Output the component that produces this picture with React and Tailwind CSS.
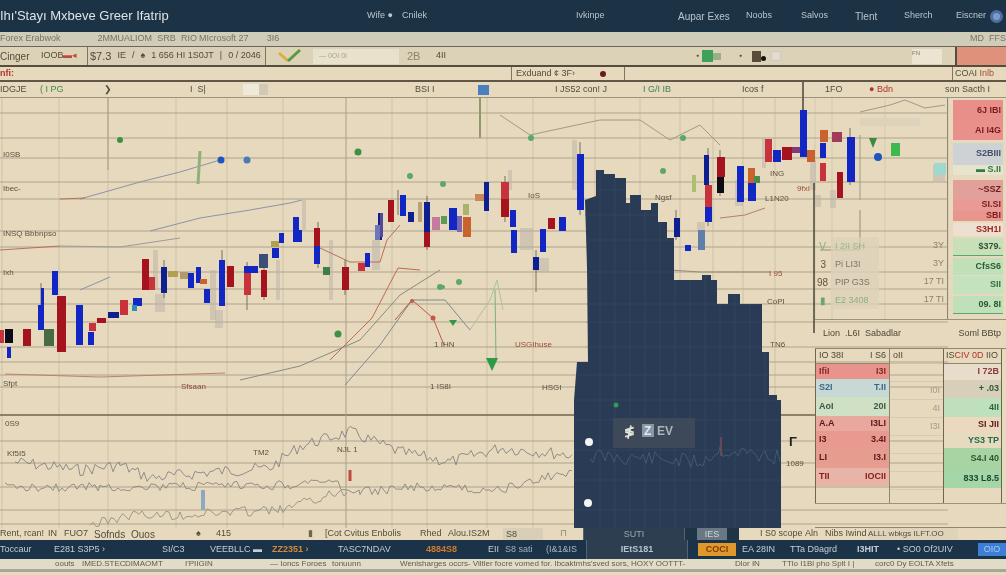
import React from 'react';

const B = '#1226c4';
const N = '#0e1f8f';
const R = '#a5141e';
const L = '#c8323a';
const K = '#0c0c18';
const G = '#4a8a4c';
const O = '#c8632e';
const T = '#b0a050';

// x, y, w, h, colour
const candles = [
  [0, 330, 4, 13, L], [5, 329, 8, 14, K], [7, 347, 4, 11, B], [23, 329, 8, 17, R], [41, 288, 3, 30, B], [38, 305, 6, 25, B],
  [44, 329, 10, 17, '#4a6a45'], [52, 271, 6, 24, B], [57, 296, 9, 56, R], [76, 305, 7, 40, B], [88, 332, 6, 13, B],
  [89, 323, 7, 8, L], [97, 318, 9, 5, R], [108, 312, 11, 6, N], [120, 300, 8, 15, L], [133, 298, 9, 8, B], [132, 305, 5, 6, '#2f8fb0'],
  [142, 259, 7, 31, R], [149, 277, 6, 13, L], [161, 267, 6, 26, N], [168, 271, 10, 6, T], [180, 272, 8, 7, '#b49a6a'],
  [188, 273, 6, 15, B], [196, 267, 5, 16, B], [200, 279, 7, 5, O], [204, 289, 6, 14, B], [219, 260, 6, 46, B],
  [227, 266, 7, 21, R], [244, 273, 7, 22, L], [244, 266, 14, 7, B], [261, 270, 6, 27, R], [259, 254, 9, 14, '#3a4e78'],
  [272, 248, 7, 10, B], [271, 241, 8, 6, T], [279, 233, 5, 10, B], [293, 217, 6, 25, B], [298, 230, 4, 12, B],
  [314, 245, 6, 19, B], [314, 228, 6, 18, R], [323, 267, 7, 8, '#3f7d4c'], [342, 267, 7, 23, R], [358, 263, 7, 8, L],
  [365, 253, 5, 14, B], [378, 213, 4, 27, N], [375, 225, 5, 15, '#6d76b8'], [388, 200, 6, 22, R], [380, 213, 3, 24, '#55479a'],
  [400, 195, 6, 21, B], [408, 212, 6, 10, N], [418, 202, 4, 20, '#b9a178'], [424, 202, 6, 30, N], [424, 232, 6, 15, R],
  [432, 217, 8, 13, '#c47aa0'], [441, 216, 6, 8, '#5d9a58'], [449, 208, 8, 22, B], [457, 216, 5, 16, '#7b65b0'],
  [463, 204, 6, 11, '#a8b46c'], [463, 217, 8, 20, O], [475, 194, 10, 7, '#c98858'], [484, 182, 5, 29, N],
  [501, 182, 8, 17, L], [501, 199, 8, 18, R], [510, 210, 6, 17, B], [511, 230, 6, 23, B], [540, 229, 6, 23, B],
  [533, 257, 6, 13, N], [548, 218, 7, 11, R], [559, 217, 7, 14, B], [577, 154, 7, 56, B],
  [674, 218, 6, 19, N], [685, 245, 6, 6, B], [698, 230, 7, 20, '#5d7fa8'], [704, 155, 5, 30, N], [705, 185, 7, 22, L],
  [705, 207, 7, 15, B], [717, 157, 8, 20, R], [717, 177, 7, 16, K], [737, 166, 7, 36, B], [748, 183, 8, 18, B],
  [748, 168, 7, 15, O], [754, 176, 6, 7, G], [765, 139, 7, 23, L], [773, 150, 8, 12, B], [782, 147, 10, 13, R],
  [792, 147, 15, 6, '#7a3c7a'], [800, 110, 7, 47, B], [807, 150, 8, 12, O], [820, 130, 8, 12, O], [820, 143, 6, 15, B],
  [820, 163, 6, 18, L], [832, 132, 10, 10, '#a03c5a'], [847, 137, 8, 45, B], [837, 172, 6, 26, R],
];

// pale shadows behind the candles
const ghosts = [
  [153, 250, 5, 40], [155, 294, 10, 18], [210, 270, 6, 50], [215, 310, 8, 18], [276, 260, 4, 40], [302, 200, 4, 30],
  [329, 240, 4, 60], [372, 240, 8, 30], [520, 228, 13, 22], [508, 170, 4, 20], [572, 140, 5, 50], [535, 258, 14, 14],
  [735, 180, 8, 26], [762, 138, 4, 30], [810, 160, 6, 30], [697, 222, 8, 10], [815, 195, 6, 12], [830, 190, 6, 18],
  [933, 165, 12, 16],
];

const wicks = [
  [41, 283, 41, 330], [164, 260, 164, 298], [222, 250, 222, 306], [247, 262, 247, 310], [264, 262, 264, 300],
  [318, 222, 318, 268], [345, 260, 345, 295], [398, 190, 398, 215], [427, 196, 427, 250], [505, 176, 505, 222],
  [536, 250, 536, 292], [580, 142, 580, 215], [676, 210, 676, 240], [708, 148, 708, 226], [720, 150, 720, 196],
  [850, 128, 850, 185],
];

const hLines = [113, 138, 158, 182, 199, 231, 247, 272, 289, 304, 322, 347, 362, 375, 387, 441, 463, 487, 510, 524];
const vLines = [2, 59, 108, 176, 227, 283, 392, 427, 487, 533, 595, 640, 680, 713, 743, 775];
const darkGridX = [600, 615, 630, 645, 660, 675, 690, 705, 720, 735, 750, 765];
const darkGridY = [190, 215, 240, 272, 304, 322, 347, 375, 400, 420, 450, 480, 510];

const indicators = [
  ['#8c92a8', '80,199 140,182 180,172 220,160'],
  ['#b8705a', '60,199 85,198'],
  ['#8c92a8', '150,231 200,218 250,210 290,203 302,200'],
  ['#b8705a', '0,250 60,246'],
  ['#9c9a9a', '60,246 120,247 180,238'],
  ['#8c92a8', '80,290 110,277'],
  ['#c08068', '5,374 100,377 225,373'],
  ['#8a8a80', '240,380 300,366 360,340 400,295 440,270'],
  ['#c46a50', '330,360 372,318 398,268 420,270'],
  ['#b8705a', '320,248 350,262 380,262 387,240 400,225'],
  ['#7c8a90', '345,385 380,345 412,300 445,300 470,330'],
  ['#c0584c', '395,320 412,300 433,318 444,345'],
  ['#a8c4a0', '470,330 490,300 497,280 503,310'],
  ['#7db07d', '495,290 496,360'],
  ['#a09a88', '500,115 530,135 600,120 640,120 670,140 700,125 720,145'],
  ['#a09a88', '860,112 890,105 905,100 925,108 945,105'],
  ['#b0846a', '720,218 745,215 765,208'],
  ['#948c7c', '600,272 640,268 700,272 770,272'],
  ['#a09a88', '860,135 860,200'],
  ['#a08878', '860,210 860,250 820,250'],
];

const dots = [
  ['#3d9140', 120, 140, 3], ['#3d9140', 358, 152, 3.5], ['#1e55c4', 221, 160, 3.5], ['#4a7ab8', 247, 160, 3.5],
  ['#3d9140', 338, 334, 3.5], ['#5ca868', 410, 176, 3], ['#5ca868', 443, 184, 3], ['#5ca868', 440, 287, 3],
  ['#5ca868', 459, 282, 3], ['#5ca868', 443, 287, 2], ['#5ca868', 531, 138, 3], ['#5ca868', 663, 171, 3],
  ['#5ca868', 683, 138, 3], ['#c0584c', 412, 301, 2], ['#c0584c', 433, 318, 2.5], ['#1e55c4', 878, 157, 4],
];

function jag(points, amp, seed) {
  let s = seed;
  const out = [];
  for (let i = 0; i < points.length - 1; i++) {
    const [x0, y0] = points[i];
    const [x1, y1] = points[i + 1];
    for (let x = x0; x < x1; x += 3) {
      s = (s * 9301 + 49297) % 233280;
      const n = (s / 233280 - 0.5) * amp;
      const y = y0 + ((y1 - y0) * (x - x0)) / (x1 - x0);
      out.push(`${x},${(y + n).toFixed(1)}`);
    }
  }
  return out.join(' ');
}

const waves = [
  ['#7a7980', jag([[15, 462], [80, 470], [120, 465], [150, 478], [210, 472], [270, 468], [300, 446], [350, 432], [400, 452], [450, 462], [500, 448], [574, 455]], 12, 7)],
  ['#7f7c78', jag([[5, 487], [100, 487], [180, 487], [290, 485], [320, 480], [360, 492], [420, 487], [500, 490], [574, 470]], 9, 21)],
  ['#8a8880', jag([[90, 525], [130, 515], [180, 515], [230, 512], [280, 510], [320, 498], [350, 490]], 10, 33)],
];

const overlayWave = jag([[590, 456], [640, 458], [700, 462], [720, 450], [781, 458]], 16, 11);

const silhouette =
  '585,200 596,196 596,170 604,170 604,174 615,174 615,178 626,178 626,203 630,203 630,195 641,195 641,210 651,210 651,203 658,203 658,222 667,222 667,238 674,238 674,280 702,280 702,275 711,275 711,280 717,280 717,304 728,304 728,294 740,294 740,304 762,304 762,352 769,352 769,395 777,395 777,400 781,400 781,528 574,528 574,400 577,362 588,362 587,267';

function Label({ x, y, fill = '#5b5342', size = 8, children }) {
  return (
    <text x={x} y={y} fill={fill} fontSize={size}>
      {children}
    </text>
  );
}

function ChartCanvas() {
  return (
    <svg viewBox="0 98 815 430" className="w-[815px] h-[430px] shrink-0 overflow-visible">
      <defs>
        <clipPath id="darkClip">
          <polygon points={silhouette} />
        </clipPath>
      </defs>
      {vLines.map((x) => (
        <line key={x} x1={x} y1="98" x2={x} y2="528" stroke="#cdc1a7" strokeWidth="1" />
      ))}
      {[815, 832, 885, 948].map((x) => (
        <line key={x} x1={x} y1="98" x2={x} y2="320" stroke="#d4c9af" strokeWidth="1" />
      ))}
      {hLines.map((y) => (
        <line key={y} x1="0" y1={y} x2="948" y2={y} stroke="#aea48e" strokeWidth="1" />
      ))}
      <line x1="0" y1="415" x2="815" y2="415" stroke="#6e6552" strokeWidth="1.5" />
      <line x1="346" y1="98" x2="346" y2="528" stroke="#a89e88" />
      <line x1="108" y1="98" x2="108" y2="170" stroke="#a49a84" />

      {ghosts.map(([x, y, w, h], i) => (
        <rect key={i} x={x} y={y} width={w} height={h} fill="#b8b2a8" opacity="0.5" />
      ))}
      <rect x="860" y="118" width="60" height="8" fill="#ddd2bb" />
      {indicators.map(([c, p], i) => (
        <polyline key={i} points={p} fill="none" stroke={c} strokeWidth="1" />
      ))}
      {waves.map(([c, p], i) => (
        <polyline key={i} points={p} fill="none" stroke={c} strokeWidth="0.8" />
      ))}
      {wicks.map(([x1, y1, x2, y2], i) => (
        <line key={i} x1={x1} y1={y1} x2={x2} y2={y2} stroke="#77705f" strokeWidth="1" />
      ))}
      <line x1="480" y1="98" x2="480" y2="138" stroke="#8f9a66" strokeWidth="2" />
      <line x1="803" y1="82" x2="803" y2="110" stroke="#4c4637" strokeWidth="1.5" />
      <line x1="814" y1="183" x2="814" y2="333" stroke="#4c4637" strokeWidth="1.5" />
      <line x1="200" y1="151" x2="198" y2="184" stroke="#8fb07a" strokeWidth="3" />
      <line x1="694" y1="175" x2="694" y2="192" stroke="#a8c070" strokeWidth="4" />
      <line x1="350" y1="470" x2="350" y2="481" stroke="#c0483c" strokeWidth="3" />
      <line x1="203" y1="490" x2="203" y2="510" stroke="#8fa8c0" strokeWidth="4" />

      {candles.map(([x, y, w, h, c], i) => (
        <rect key={i} x={x} y={y} width={w} height={h} fill={c} />
      ))}
      {dots.map(([c, x, y, r], i) => (
        <circle key={i} cx={x} cy={y} r={r} fill={c} />
      ))}
      <polygon points="486,358 498,358 492,371" fill="#2e9a48" />
      <polygon points="449,320 457,320 453,326" fill="#2e9a48" />
      <rect x="891" y="143" width="9" height="13" fill="#3fb84f" />
      <polygon points="869,138 877,138 873,148" fill="#3d8a3a" />
      <rect x="934" y="163" width="12" height="12" fill="#9fd8cf" />

      <polygon points={silhouette} fill="#2a3c55" />
      <g clipPath="url(#darkClip)">
        {darkGridX.map((x) => (
          <line key={x} x1={x} y1="160" x2={x} y2="528" stroke="#33455c" strokeWidth="1" />
        ))}
        {darkGridY.map((y) => (
          <line key={y} x1="570" y1={y} x2="785" y2={y} stroke="#33455c" strokeWidth="1" />
        ))}
        <polyline points={overlayWave} fill="none" stroke="#4a5f7e" strokeWidth="0.8" />
        <line x1="721" y1="437" x2="721" y2="456" stroke="#7a4a55" strokeWidth="1.5" />
      </g>
      <rect x="613" y="418" width="82" height="30" fill="#3d4958" />
      <rect x="642" y="424" width="12" height="13" fill="#8797a8" />
      <text x="624" y="436" fill="#e4e4de" fontSize="13" fontWeight="700">≸</text>
      <text x="644" y="435" fill="#e4e8ea" fontSize="12" fontWeight="700">Z</text>
      <text x="657" y="435" fill="#aab4bc" fontSize="12" fontWeight="700">EV</text>
      <circle cx="589" cy="442" r="4" fill="#f4f4f2" />
      <circle cx="588" cy="503" r="4" fill="#f4f4f2" />
      <circle cx="616" cy="405" r="2.5" fill="#2e9a58" />

      <Label x={3} y={157}>I0SB</Label>
      <Label x={3} y={191}>Ibec-</Label>
      <Label x={3} y={236}>INSQ Bbbnpso</Label>
      <Label x={3} y={275}>Ixh</Label>
      <Label x={3} y={386}>Sfpt</Label>
      <Label x={181} y={389} fill="#8a4a3a">Sfsaan</Label>
      <Label x={5} y={426}>0S9</Label>
      <Label x={7} y={456}>Kf5I5</Label>
      <Label x={253} y={455}>TM2</Label>
      <Label x={337} y={452}>NJL 1</Label>
      <Label x={434} y={347}>1 IHN</Label>
      <Label x={515} y={347} fill="#a04a3a">USGIhuse</Label>
      <Label x={430} y={389}>1 IS8I</Label>
      <Label x={542} y={390}>HSGI</Label>
      <Label x={655} y={200}>Ngsf</Label>
      <Label x={770} y={176}>ING</Label>
      <Label x={765} y={201}>L1N20</Label>
      <Label x={797} y={191} fill="#a04a3a">9fxI</Label>
      <Label x={767} y={304}>CoPI</Label>
      <Label x={770} y={347}>TN6</Label>
      <Label x={769} y={276} fill="#a04a3a">I 95</Label>
      <Label x={786} y={466}>1089</Label>
      <Label x={528} y={198}>IoS</Label>
      <text x="789" y="446" fill="#222" fontSize="13" fontWeight="700">Γ</text>
    </svg>
  );
}

const upperRows = [
  ['h-[22px] bg-[#e88f8a] text-[#7a1e1e]', '6J IBI'],
  ['h-[18px] bg-[#e9908c] text-[#7a1e1e]', 'AI  I4G'],
  ['mt-[3px] h-[22px] bg-[#cfd2d4] text-[#44506c]', 'S2BIII'],
  ['h-[10px] bg-[#e6e4cc] text-[#2e7a42]', '▬ S.II'],
  ['mt-[5px] h-[19px] bg-[#e2a09a] text-[#6e1e1e]', '~SSZ'],
  ['h-[12px] bg-[#ea9a94] text-[#7a1e1e]', 'SI.SI'],
  ['h-[10px] bg-[#e8958e] text-[#7a1e1e]', 'SBI'],
  ['mt-[2px] h-[13px] bg-[#eee0d0] text-[#9a2a22]', 'S3H1I'],
  ['mt-[2px] h-[18px] bg-[#c9dfb9] border-b border-[#5aa868] text-[#2a5a34]', '$379.'],
  ['mt-[2px] h-[17px] bg-[#bfe0b8] text-[#2a5a34]', 'CfsS6'],
  ['mt-[1px] h-[18px] bg-[#c4e2be] text-[#3a6a44]', 'SII'],
  ['mt-[2px] h-[18px] bg-[#bfe0b8] border-b border-[#5aa868] text-[#2a5a34]', '09. 8I'],
];

const faintRows = [
  ['V', 'I 2II SH', 'text-[#7fb07f]'],
  ['3', 'Pi LI3I', 'text-[#5b5342]'],
  ['98', 'PIP G3S', 'text-[#5b5342]'],
  ['▮', 'E2 3408', 'text-[#6ea36e]'],
];

const leftRows = [
  ['h-[15px] bg-[#e8948c] text-[#8a2a28]', 'IfiI', 'I3I'],
  ['h-[18px] bg-[#c8d8d4] text-[#3a6a8a]', 'S2I', 'T.II'],
  ['h-[19px] bg-[#cfe0c4] text-[#3a5a4a]', 'AoI', '20I'],
  ['h-[15px] bg-[#e9a89e] text-[#5a1a1a]', 'A.A', 'I3LI'],
  ['h-[17px] bg-[#e89a90] text-[#5a1a1a]', 'I3', '3.4I'],
  ['h-[20px] bg-[#e79c90] text-[#5a1a1a]', 'LI', 'I3.I'],
  ['h-[18px] bg-[#e8b4a8] text-[#8a1a18]', 'TII', 'IOCII'],
];

const rightRows = [
  ['h-[16px] bg-[#e8dccb] text-[#8a3a3a]', 'I 72B'],
  ['h-[18px] bg-[#d8cfb8] text-[#2a5a3a]', '+ .03'],
  ['h-[19px] bg-[#bfe0bc] text-[#2a6a3a]', '4II'],
  ['h-[16px] bg-[#ecd8bf] text-[#5a1a1a]', 'SI JII'],
  ['h-[15px] bg-[#e6dabf] text-[#1e6a4a]', 'YS3 TP'],
  ['h-[22px] bg-[#a8d4a4] text-[#2a5a34]', 'S4.I 40'],
  ['h-[18px] bg-[#a4d6a8] text-[#1e4a2a]', '833 L8.5'],
];

function SidePanels() {
  return (
    <aside className="flex flex-col w-[191px] h-[430px] text-[9px] text-[#4e4737]">
      <div className="flex h-[222px] border-b border-[#9c937e]">
        <div className="flex flex-col justify-end w-[133px] pb-[10px] border-r border-[#8f8672]">
          {faintRows.map(([a, b, c]) => (
            <div key={b} className={`flex items-center h-[18px] gap-[5px] pl-[2px] ${c}`}>
              <span className="w-[9px] text-[10px] text-right">{a}</span>
              <span className="w-[48px] h-[18px] px-[4px] leading-[18px] bg-[#ddd2bb] opacity-75">{b}</span>
              <span className="ml-auto pr-[3px] text-[#8a8270]">{a === '3' || a === 'V' ? '3Y' : '17 TI'}</span>
            </div>
          ))}
        </div>
        <div className="flex flex-col w-[50px] ml-[5px] pt-[2px]">
          {upperRows.map(([cls, t]) => (
            <div key={t} className={`flex items-center justify-end pr-[2px] font-bold ${cls}`}>
              {t}
            </div>
          ))}
        </div>
      </div>

      <div className="flex items-center justify-between h-[29px] pl-[8px] pr-[5px] border-b border-[#8f8672]">
        <span>Lion&nbsp;&nbsp;.L6I&nbsp;&nbsp;Sabadlar</span>
        <span>Soml BBtp</span>
      </div>

      <div className="flex border-b border-[#9c937e] h-[155px]">
        <div className="flex flex-col w-[74px] border-l border-[#6e6552]">
          <div className="flex justify-between h-[15px] px-[3px] border-b border-[#8f8672]">
            <span>IO 38I</span>
            <span>I S6</span>
          </div>
          {leftRows.map(([cls, a, b]) => (
            <div key={a} className={`flex items-center justify-between px-[3px] font-bold ${cls}`}>
              <span>{a}</span>
              <span>{b}</span>
            </div>
          ))}
        </div>
        <div className="flex flex-col w-[54px] border-l border-[#8f8672]">
          <div className="h-[15px] pl-[3px] border-b border-[#cfc3a8]">oII</div>
          {['', 'I0I', '4I', 'I3I', '', '', ''].map((t, i) => (
            <div key={i} className="flex items-center justify-end h-[18px] pr-[3px] border-b border-[#d6cbb2] text-[#a39a85]">
              {t}
            </div>
          ))}
        </div>
        <div className="flex flex-col w-[59px] border-x border-[#6e6552]">
          <div className="h-[15px] px-[2px] border-b border-[#8f8672] whitespace-nowrap">
            IS<span className="text-[#b0342c]">CIV 0D</span> IIO
          </div>
          {rightRows.map(([cls, t]) => (
            <div key={t} className={`flex items-center justify-end pr-[2px] font-bold whitespace-nowrap ${cls}`}>
              {t}
            </div>
          ))}
        </div>
      </div>

      <div className="flex-1 border-b border-[#8f8672]" />
    </aside>
  );
}

export default function App() {
  return (
    <div className="w-[1006px] h-[575px] overflow-hidden flex flex-col bg-[#e6d9bd] font-['Liberation_Sans',Arial,sans-serif] blur-[0.35px]">
      {/* Top navigation */}
      <header className="flex items-center h-[32px] bg-[#1c3245] text-[#b9c6cf] text-[9px] shrink-0 whitespace-nowrap">
        <span className="w-[367px] text-[13px] text-[#dde3e6]">Ihı'Stayı Mxbeve Greer Ifatrip</span>
        <span className="w-[35px]">Wife ●</span>
        <span className="w-[174px]">Cnilek</span>
        <span className="w-[102px]">Ivkinpe</span>
        <span className="w-[68px] text-[10px]">Aupar Exes</span>
        <span className="w-[55px]">Noobs</span>
        <span className="w-[54px]">Salvos</span>
        <span className="w-[49px] text-[10px]">Tlent</span>
        <span className="w-[52px]">Sherch</span>
        <span className="w-[34px]">Eiscner</span>
        <span className="w-[13px] h-[13px] rounded-full bg-[#7d9ad0] border-[3px] border-[#4e6f9e]" />
      </header>

      {/* Symbol strip */}
      <div className="flex items-center h-[15px] bg-[#cfcdb9] border-b border-[#6e6552] text-[9px] text-[#77745f] shrink-0 whitespace-nowrap">
        <span className="w-[98px]">Forex Erabwok</span>
        <span className="w-[60px]">2MMUALIOM</span>
        <span className="w-[24px]">SRB</span>
        <span className="w-[18px]">RIO</span>
        <span className="w-[68px]">MIcrosoft 27</span>
        <span className="w-[707px]">3I6</span>
        <span>MD&nbsp;&nbsp;FFS</span>
      </div>

      {/* Order toolbar */}
      <div className="flex items-center h-[20px] bg-[#dcd2b8] border-b-2 border-[#564e3d] text-[9px] text-[#534c3b] shrink-0 whitespace-nowrap">
        <span className="w-[41px] text-[10px]">Cinger</span>
        <span className="w-[22px]">IOOB</span>
        <span className="w-[24px] text-[#c0483c]">▬◂</span>
        <div className="flex items-center gap-[6px] w-[179px] h-full px-[2px] border-x border-[#7d7462] bg-[#d8cfb6]">
          <span className="text-[11px]">$7.3</span>
          <span>IE</span>
          <span>/</span>
          <span>♠</span>
          <span>1 656 HI 1S0JT</span>
          <span>|</span>
          <span>0 / 2046</span>
        </div>
        <div className="flex items-center justify-center w-[47px]">
          <svg width="24" height="14" viewBox="0 0 24 14">
            <path d="M1 4 L10 12" stroke="#d8b040" strokeWidth="3" fill="none" />
            <path d="M10 12 L22 1" stroke="#5c9a3c" strokeWidth="3" fill="none" />
          </svg>
        </div>
        <div className="flex items-center w-[86px] h-[15px] px-[6px] bg-[#e8e2cc] text-[#a8a48f] text-[7px]">— 0OI 0I</div>
        <span className="w-[25px] pl-[8px] text-[11px] text-[#8a846e]">2B</span>
        <span className="w-[272px] pl-[12px]">4II</span>
        <span className="w-[6px] text-[5px]">●</span>
        <span className="w-[11px] h-[12px] bg-[#3fa05a]" />
        <span className="w-[8px] h-[7px] mr-[18px] bg-[#9cae88]" />
        <span className="w-[8px] text-[5px]">●</span>
        <span className="w-[9px] h-[11px] ml-[5px] bg-[#5a4a3a]" />
        <span className="w-[5px] h-[5px] mt-[5px] rounded-full bg-[#111]" />
        <span className="w-[10px] h-[10px] ml-[5px] bg-[#e4dccb] border border-[#cfc8c8]" />
        <span className="w-[30px] h-[15px] ml-[131px] bg-[#ece4d0] text-[6px] text-[#777]">FN</span>
        <span className="w-[51px] h-full ml-[13px] border-l-2 border-[#564e3d] bg-[#e0917c]" />
      </div>

      {/* Secondary tabs */}
      <div className="flex items-center h-[15px] border-b-2 border-[#605845] text-[9px] text-[#534c3b] shrink-0 whitespace-nowrap">
        <span className="w-[511px] text-[#b0342c] font-bold">nfi:</span>
        <div className="flex items-center w-[114px] h-full px-[4px] border-x border-[#7d7462]">
          <span className="w-[70px]">Exduand ¢ 3F›</span>
          <span className="w-[6px] h-[6px] ml-[14px] rounded-full bg-[#6a1a1a]" />
        </div>
        <span className="w-[327px]" />
        <div className="flex items-center w-[54px] h-full px-[2px] border-l border-[#7d7462]">
          COAI&nbsp;<span className="text-[#a8483c]">Inlb</span>
        </div>
      </div>

      {/* Axis row */}
      <div className="flex items-center h-[16px] border-b border-[#9c937e] text-[9px] text-[#534c3b] shrink-0 whitespace-nowrap">
        <span className="w-[40px]">IDGJE</span>
        <span className="w-[64px] text-[#3f8a4c]">( I PG</span>
        <span className="w-[86px]">❯</span>
        <span className="w-[53px]">I&nbsp;&nbsp;S|</span>
        <span className="w-[25px] h-[11px] bg-[#efe9d9] border-r-[9px] border-[#d2c9b5]" />
        <span className="w-[147px]" />
        <span className="w-[63px]">BSI I</span>
        <span className="w-[11px] h-[10px] bg-[#4a7fc0]" />
        <span className="w-[66px]" />
        <span className="w-[88px]">I JS52 con! J</span>
        <span className="w-[99px] text-[#3f7d5a]">I G/I IB</span>
        <span className="w-[83px]">Icos f</span>
        <span className="w-[44px]">1FO</span>
        <span className="w-[76px] text-[#b0342c]">● Bdn</span>
        <span>son Sacth I</span>
      </div>

      {/* Chart and order book */}
      <div className="flex h-[430px] shrink-0">
        <ChartCanvas />
        <SidePanels />
      </div>

      {/* Legend strip */}
      <div className="flex items-center h-[12px] text-[9px] text-[#534c3b] shrink-0 whitespace-nowrap">
        <span className="w-[48px]">Rent, rcan!</span>
        <span className="w-[16px]">IN</span>
        <span className="w-[30px]">FUO7</span>
        <span className="w-[37px] text-[10px]">Sofnds</span>
        <span className="w-[65px] text-[10px]">Ouos</span>
        <span className="w-[20px]">♠</span>
        <span className="w-[92px]">415</span>
        <span className="w-[17px] text-[#6e6552]">▮</span>
        <span className="w-[95px]">[Cot Cvitus Enbolis</span>
        <span className="w-[28px]">Rhed</span>
        <span className="w-[55px]">Alou.IS2M</span>
        <span className="w-[40px] h-full pl-[3px] bg-[#d8cfb6]">S8</span>
        <span className="w-[40px] pl-[17px] text-[#8a8270]">⊓</span>
        <div className="flex justify-center w-[102px] h-full bg-[#2c3e50] border-x border-[#55636f] text-[#9aa7b3]">SUTI</div>
        <div className="flex items-center justify-center w-[54px] h-full bg-[#1f3447]">
          <span className="w-[30px] h-full bg-[#6a7784] text-[#d0d6da] text-center">IES</span>
        </div>
        <span className="w-[66px] pl-[21px]">I S0 scope</span>
        <span className="w-[20px]">Aln</span>
        <span className="w-[43px]">Nibs Iwind</span>
        <span className="w-[90px] h-full bg-[#dfd4ba] text-[8px]">ALLL wbkgs ILFT.OO</span>
      </div>

      {/* Ticker */}
      <div className="flex items-center h-[19px] bg-[#1b3349] text-[9px] text-[#c4cdd4] shrink-0 whitespace-nowrap">
        <span className="w-[54px]">Toccaur</span>
        <span className="w-[108px]">E281 S3P5 ›</span>
        <span className="w-[48px]">SI/C3</span>
        <span className="w-[62px]">VEEBLLC ▬</span>
        <span className="w-[66px] text-[#d08a3c] font-bold">ZZ2351 ›</span>
        <span className="w-[88px]">TASC7NDAV</span>
        <span className="w-[62px] text-[#d07a2c] font-bold">4884S8</span>
        <span className="w-[17px]">EII</span>
        <span className="w-[41px] text-[#9fb0bf]">S8 sati</span>
        <span className="w-[40px] text-[#a8b7c4]">(I&amp;1&amp;IS</span>
        <div className="flex items-center justify-center w-[102px] h-full bg-[#2c3e50] border-x border-[#55636f] font-bold text-[#b6c2cc]">IEtS181</div>
        <span className="w-[10px]" />
        <span className="w-[38px] h-[13px] bg-[#e0982c] text-[#7a3c0c] text-center leading-[13px] font-bold">COCI</span>
        <span className="w-[54px] pl-[6px]">EA 28IN</span>
        <span className="w-[67px]">TTa D9agrd</span>
        <span className="w-[40px] font-bold">I3HIT</span>
        <span className="w-[81px]">• SO0 Of2UIV</span>
        <span className="w-[28px] h-[13px] bg-[#3d7fd6] text-[#a8c8f0] text-center leading-[13px]">OIO</span>
      </div>

      {/* Status line */}
      <div className="flex items-center h-[13px] bg-[#e0dcc6] border-b-[3px] border-[#a8a698] text-[8px] text-[#625c4a] shrink-0 whitespace-nowrap">
        <span className="w-[55px]" />
        <span className="w-[27px]">oouts</span>
        <span className="w-[43px]">IMED.STEC</span>
        <span className="w-[60px]">DIMAOMT</span>
        <span className="w-[85px]">I'PIIGIN</span>
        <span className="w-[62px]">— Ioncs Foroes</span>
        <span className="w-[68px]">tonuunn</span>
        <span className="w-[335px]">Wenisharges occrs- Viltler focre vomed for. Ibcaktmhs'sved sors, HOXY OOTTT-</span>
        <span className="w-[47px]">Dlor IN</span>
        <span className="w-[93px]">TTlo I1Bl pho Splt I |</span>
        <span>corc0 Dy EOLTA Xfets</span>
      </div>
    </div>
  );
}
